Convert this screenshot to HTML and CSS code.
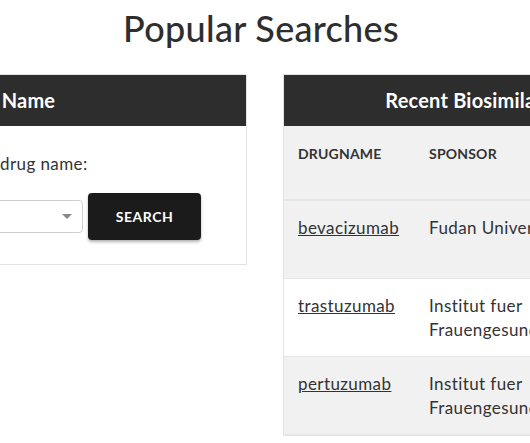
FILE: index.html
```html
<!DOCTYPE html>
<html lang="en">
   <head>
      <meta charset="UTF-8">
      <meta name="viewport" content="width=device-width, initial-scale=1.0">
      <link rel="stylesheet" href="styles.css">
      <title>Popular Searches</title>
   </head>
   <body>
      <h1 class="page-title">Popular Searches</h1>
      <div class="cards">
         <div class="card card-search">
            <h3 class="card-head">Search by Name</h3>
            <div class="card-body">
               <label class="field-label" for="drugSelect">Select a drug name:</label>
               <form class="search-row" action="" method="get">
                  <div class="select-box">
                     <select id="drugSelect" name="drug">
                        <option></option>
                     </select>
                     <span class="caret"></span>
                  </div>
                  <button class="search-btn" type="submit">SEARCH</button>
               </form>
            </div>
         </div>
         <div class="card card-table">
            <h3 class="card-head centered">Recent Biosimilar Trials</h3>
            <table class="trials">
               <thead>
                  <tr>
                     <th class="col-drug">DRUGNAME</th>
                     <th class="col-sponsor">SPONSOR</th>
                  </tr>
               </thead>
               <tbody>
                  <tr>
                     <td><a href="#">bevacizumab</a></td>
                     <td>Fudan University Shanghai</td>
                  </tr>
                  <tr>
                     <td><a href="#">trastuzumab</a></td>
                     <td>Institut fuer<br>Frauengesundheit</td>
                  </tr>
                  <tr>
                     <td><a href="#">pertuzumab</a></td>
                     <td>Institut fuer<br>Frauengesundheit</td>
                  </tr>
               </tbody>
            </table>
         </div>
      </div>
   </body>
</html>
```

FILE: styles.css
```css
body {
margin: 0;
font-family: Lato, "Open Sans", sans-serif;
color: #333;
background: #fff;
overflow: hidden;
}
.page-title {
margin: 0;
padding: 6px 8px 0 0;
height: 68px;
text-align: center;
font-size: 36px;
font-weight: 500;
letter-spacing: 0.3px;
line-height: 44px;
color: #2e2e2e;
}
.cards {
display: flex;
gap: 36px;
margin-left: -154px;
}
.card {
border: 1px solid #e3e3e3;
background: #fff;
}
.card-search {
width: 401px;
flex: none;
height: 191px;
box-sizing: border-box;
}
.card-table {
width: 412px;
flex: none;
}
.card-head {
margin: 0;
height: 51px;
line-height: 51px;
background-color: #2d2d2d;
color: #fff;
font-size: 20px;
font-weight: 700;
letter-spacing: 0.2px;
padding-left: 62px;
}
.card-head.centered {
text-align: center;
padding-left: 0;
}
.card-body {
padding: 26px 0 0 87px;
}
.field-label {
display: block;
font-size: 17px;
letter-spacing: 0.4px;
line-height: 24px;
height: 41px;
}
.search-row {
display: flex;
align-items: center;
gap: 5px;
margin: 0;
margin-left: -64px;
}
.select-box {
position: relative;
width: 213px;
height: 33px;
}
.select-box select {
width: 100%;
height: 100%;
border: 1px solid #cfcfcf;
border-radius: 4px;
background: #fff;
appearance: none;
}
.caret {
position: absolute;
right: 11px;
top: 14px;
border-left: 5px solid transparent;
border-right: 5px solid transparent;
border-top: 5px solid #888;
}
.search-btn {
width: 113px;
height: 47px;
border: none;
border-radius: 4px;
background-color: #1b1b1b;
color: #fff;
font-family: inherit;
font-size: 14px;
font-weight: 700;
letter-spacing: 0.5px;
box-shadow: 0 2px 3px rgba(0, 0, 0, 0.3);
cursor: pointer;
}
.trials {
width: 100%;
border-collapse: collapse;
font-size: 17px;
letter-spacing: 0.4px;
line-height: 24px;
}
.trials th {
text-align: left;
vertical-align: top;
font-size: 14px;
font-weight: 700;
letter-spacing: 0.2px;
padding: 16px 14px 0;
height: 57px;
background: #f1f1f1;
border-bottom: 2px solid #e6e6e6;
}
.trials td {
vertical-align: top;
padding: 15px 14px 0;
height: 62px;
white-space: nowrap;
}
.trials tbody tr:nth-child(odd) {
background: #f1f1f1;
}
.trials tbody tr {
border-bottom: 1px solid #e6e6e6;
}
.col-drug {
width: 103px;
}
.trials a {
color: #333;
text-decoration: underline;
}
```
